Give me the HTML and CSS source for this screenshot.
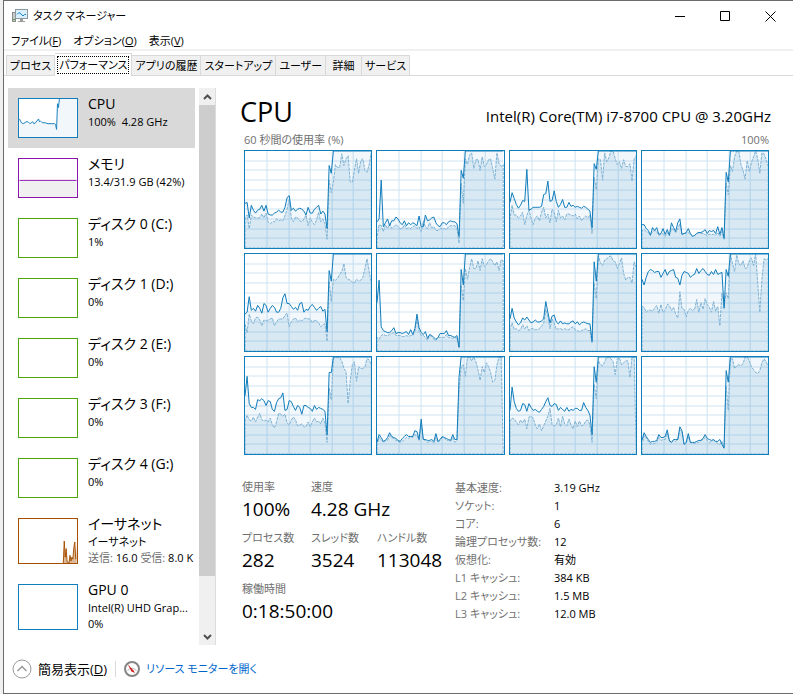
FILE: index.html
```html
<!DOCTYPE html>
<html lang="ja">
<head>
    <meta charset="UTF-8">
    <meta name="viewport" content="width=device-width, initial-scale=1.0">
    <title>タスク マネージャー</title>
    <link rel="stylesheet" href="styles.css">
</head>
<body>
    <div class="window">
        <header class="titlebar">
            <svg class="app-icon" width="16" height="14" viewBox="0 0 16 14">
                <rect x="0.5" y="3.5" width="3" height="9" fill="#c9c9c9" stroke="#8a8a8a"/>
                <rect x="1" y="10" width="2" height="1" fill="#4a4"/>
                <rect x="3.5" y="0.5" width="12" height="9" fill="#d9f0fc" stroke="#8d979e"/>
                <path d="M5 5.5L7 3.5L9 5L11 7L12.500 5.500H14" fill="none" stroke="#1583c4"/>
                <path d="M8 10h3v2h2v1H6v-1h2z" fill="#9b9b9b"/>
            </svg>
            <h1>タスク マネージャー</h1>
            <div class="window-buttons">
                <button aria-label="最小化"><svg width="11" height="11" viewBox="0 0 11 11"><path d="M0 5.5h10"/></svg></button>
                <button aria-label="最大化"><svg width="11" height="11" viewBox="0 0 11 11"><path d="M0.500 0.500h9v9h-9z"/></svg></button>
                <button aria-label="閉じる"><svg width="11" height="11" viewBox="0 0 11 11"><path d="M0.500 0.500l10 10M10.500 0.500l-10 10"/></svg></button>
            </div>
        </header>
        <nav class="menu">
            <button>ファイル(<u>F</u>)</button>
            <button>オプション(<u>O</u>)</button>
            <button>表示(<u>V</u>)</button>
        </nav>
        <div class="tabs" role="tablist">
            <button role="tab">プロセス</button>
            <button role="tab" class="selected" aria-selected="true"><span>パフォーマンス</span></button>
            <button role="tab">アプリの履歴</button>
            <button role="tab">スタートアップ</button>
            <button role="tab">ユーザー</button>
            <button role="tab">詳細</button>
            <button role="tab">サービス</button>
        </div>

        <div class="content">
            <aside class="sidebar">
                <ul class="devices">
                    <li class="device active">
                        <svg class="thumb cpu" viewBox="0 0 60 40">
                            <path class="area" d="M0 21L2 26L5 25L8 24L10 26L15 26L18 22L20 25L22 25L38 26L39 32L40 5L41 10L42 0H60V40H0z"/>
                            <path class="line" d="M0 21L2 25L4 26L7 24L9 24L11 26L14 24L15 26L17 25L20 21L21 24L22 23L24 25L27 25L30 26L37 26L38 27L39 32L40 5L41 9L42 0"/>
                        </svg>
                        <div class="info">
                            <h2>CPU</h2>
                            <p>100%&nbsp; 4.28 GHz</p>
                        </div>
                    </li>
                    <li class="device">
                        <svg class="thumb memory" viewBox="0 0 60 40">
                            <path class="area" d="M0 22H60V40H0z"/>
                            <path class="line" d="M0 22.500H60"/>
                        </svg>
                        <div class="info">
                            <h2>メモリ</h2>
                            <p>13.4/31.9 GB (42%)</p>
                        </div>
                    </li>
                    <li class="device">
                        <div class="thumb disk"></div>
                        <div class="info">
                            <h2>ディスク 0 (C:)</h2>
                            <p>1%</p>
                        </div>
                    </li>
                    <li class="device">
                        <div class="thumb disk"></div>
                        <div class="info">
                            <h2>ディスク 1 (D:)</h2>
                            <p>0%</p>
                        </div>
                    </li>
                    <li class="device">
                        <div class="thumb disk"></div>
                        <div class="info">
                            <h2>ディスク 2 (E:)</h2>
                            <p>0%</p>
                        </div>
                    </li>
                    <li class="device">
                        <div class="thumb disk"></div>
                        <div class="info">
                            <h2>ディスク 3 (F:)</h2>
                            <p>0%</p>
                        </div>
                    </li>
                    <li class="device">
                        <div class="thumb disk"></div>
                        <div class="info">
                            <h2>ディスク 4 (G:)</h2>
                            <p>0%</p>
                        </div>
                    </li>
                    <li class="device tall">
                        <svg class="thumb ethernet" viewBox="0 0 60 46">
                            <path class="area" d="M46 46L47 23L48 40L49 31L50 45L52 46L53 38L54 44L55 40L56 42L57 30L58 24L59 42L60 26V46z"/>
                            <path class="line" d="M46 46L47 23L48 40L49 31L50 45L52 46L53 38L54 44L55 40L56 42L57 30L58 24L59 42"/>
                        </svg>
                        <div class="info">
                            <h2>イーサネット</h2>
                            <p>イーサネット</p>
                            <p><span class="muted">送信:</span> 16.0 <span class="muted">受信:</span> 8.0 K</p>
                        </div>
                    </li>
                    <li class="device tall">
                        <div class="thumb gpu"></div>
                        <div class="info">
                            <h2>GPU 0</h2>
                            <p>Intel(R) UHD Grap...</p>
                            <p>0%</p>
                        </div>
                    </li>
                </ul>
                <div class="scrollbar">
                    <button aria-label="上へ"><svg width="9" height="6" viewBox="0 0 9 6"><path d="M1 5L4.500 1.500L8 5"/></svg></button>
                    <div class="scroll-thumb"></div>
                    <button aria-label="下へ"><svg width="9" height="6" viewBox="0 0 9 6"><path d="M1 1L4.500 4.500L8 1"/></svg></button>
                </div>
            </aside>

            <main class="performance">
                <div class="heading">
                    <h2>CPU</h2>
                    <span>Intel(R) Core(TM) i7-8700 CPU @ 3.20GHz</span>
                </div>
                <div class="axis">
                    <span>60 秒間の使用率 (%)</span>
                    <span>100%</span>
                </div>
                <div class="charts" id="charts"></div>
                <div class="stats">
                    <dl class="numbers">
                        <div><dt>使用率</dt><dd>100%</dd></div>
                        <div class="wide"><dt>速度</dt><dd>4.28 GHz</dd></div>
                        <div><dt>プロセス数</dt><dd>282</dd></div>
                        <div><dt>スレッド数</dt><dd>3524</dd></div>
                        <div><dt>ハンドル数</dt><dd>113048</dd></div>
                        <div class="full"><dt>稼働時間</dt><dd>0:18:50:00</dd></div>
                    </dl>
                    <dl class="details">
                        <dt>基本速度:</dt><dd>3.19 GHz</dd>
                        <dt>ソケット:</dt><dd>1</dd>
                        <dt>コア:</dt><dd>6</dd>
                        <dt>論理プロセッサ数:</dt><dd>12</dd>
                        <dt>仮想化:</dt><dd>有効</dd>
                        <dt>L1 キャッシュ:</dt><dd>384 KB</dd>
                        <dt>L2 キャッシュ:</dt><dd>1.5 MB</dd>
                        <dt>L3 キャッシュ:</dt><dd>12.0 MB</dd>
                    </dl>
                </div>
            </main>
        </div>

        <footer class="footer">
            <button>
                <svg width="20" height="20" viewBox="0 0 20 20" fill="none">
                    <circle cx="10" cy="10" r="9" stroke="#999"/>
                    <path d="M5.500 12L10 7.500L14.500 12" stroke="#999" stroke-width="1.500"/>
                </svg>
                <span>簡易表示(<u>D</u>)</span>
            </button>
            <a href="#">
                <svg width="16" height="16" viewBox="0 0 16 16">
                    <circle cx="8" cy="8" r="7" fill="#fff" stroke="#858585" stroke-width="2"/>
                    <path d="M3.500 10A5 5 0 0 1 12.500 10" fill="none" stroke="#bbb"/>
                    <path d="M3.500 3L9.500 9.500L11 12L7.500 10.500z" fill="#d01616"/>
                </svg>
                <span>リソース モニターを開く</span>
            </a>
        </footer>
    </div>

    <script>
        // one entry per logical processor, oldest sample first
        const cores = [
            {
                total: [46,47,31,44,39,36,39,40,44,38,44,35,34,34,36,37,39,37,37,42,52,54,39,41,38,40,41,40,38,34,42,36,36,40,42,44,35,38,35,20,85,77,100],
                kernel: [30,34,20,34,32,31,31,31,35,31,36,27,25,27,27,30,28,29,28,33,40,50,31,27,32,31,28,27,30,34,23,31,27,24,29,37,27,30,25,9,70,57,68,86,83,83,97,85,92,95,68,68,80,92,77,90,92,80,78,86,98]
            },
            {
                total: [27,30,70,22,26,30,23,28,28,32,30,26,24,28,23,26,24,26,25,23,33,22,22,34,28,29,31,32,26,23,22,26,26,24,27,28,27,27,25,12,80,72,100],
                kernel: [10,24,23,17,24,20,25,20,22,24,22,20,20,24,20,21,20,22,23,20,22,17,28,22,20,26,21,22,18,18,20,20,20,19,22,23,23,23,20,5,67,46,92,86,96,98,82,91,91,80,94,84,86,91,92,82,71,98,87,84,86]
            },
            {
                total: [47,57,51,45,41,44,49,48,81,39,40,42,42,42,42,43,55,56,69,48,49,59,48,42,45,50,42,42,47,43,44,42,43,42,41,43,42,40,38,21,87,81,100],
                kernel: [30,44,34,34,31,33,37,24,34,39,31,24,31,33,28,37,42,31,35,26,40,37,27,39,31,33,29,35,35,34,33,35,30,33,28,31,33,31,34,15,73,60,92,91,70,98,89,93,100,100,92,86,89,82,91,84,84,87,69,92,95]
            },
            {
                total: [24,24,20,18,13,21,18,21,14,15,20,14,19,13,26,21,17,26,30,14,15,16,20,15,12,13,15,16,16,17,19,15,18,17,18,15,22,14,21,10,78,68,100],
                kernel: [18,19,17,16,14,17,18,17,13,14,15,12,16,13,20,19,16,20,25,14,15,15,16,14,12,13,15,16,15,15,14,13,14,14,14,13,16,12,17,9,67,55,85,79,94,100,100,86,80,71,90,79,88,94,100,92,77,98,97,91,84]
            },
            {
                total: [38,40,56,42,44,41,47,44,39,49,47,40,44,47,45,40,40,44,55,59,49,49,46,43,45,42,49,50,40,43,42,46,48,45,42,44,46,41,43,20,83,72,100],
                kernel: [28,19,38,31,28,34,35,32,26,32,31,32,33,34,26,30,33,33,33,37,39,25,30,33,34,30,32,31,33,34,33,33,29,32,31,29,25,27,28,10,72,51,74,73,75,79,82,90,76,74,73,71,70,74,72,73,76,85,95,82,70]
            },
            {
                total: [50,73,25,21,20,19,19,21,24,18,19,19,18,19,20,17,22,17,23,38,24,19,17,20,13,17,16,14,12,14,18,18,18,21,16,16,15,14,16,4,84,68,100],
                kernel: [14,12,16,17,16,16,17,18,19,16,16,16,15,15,16,15,16,16,20,33,20,16,16,14,11,16,15,12,11,14,14,14,14,17,14,14,13,14,13,3,68,52,85,74,86,95,85,85,93,83,95,87,89,93,95,92,88,92,83,94,93]
            },
            {
                total: [33,44,34,30,27,29,34,32,35,32,29,30,32,30,30,31,33,51,40,29,36,37,30,28,31,28,29,28,28,30,31,28,30,27,29,30,29,28,28,10,92,72,100],
                kernel: [23,29,22,23,21,22,27,23,26,21,23,23,22,22,23,26,28,43,36,23,33,29,22,23,23,22,23,22,22,24,25,22,21,20,21,22,23,21,21,8,70,54,98,91,88,94,95,97,98,93,92,85,90,96,80,73,76,76,70,92,86]
            },
            {
                total: [74,68,76,82,84,83,81,82,82,76,80,84,78,82,83,84,76,75,68,78,82,81,80,76,78,79,85,80,83,85,82,79,78,82,79,84,79,80,81,44,84,77,100],
                kernel: [46,45,40,42,42,41,44,47,39,48,40,42,48,47,42,45,38,34,61,44,43,35,42,44,42,43,53,40,50,43,54,48,45,40,51,41,46,26,60,47,60,54,100,90,82,99,90,88,93,85,86,93,96,88,100,70,40,74,95,94,95]
            },
            {
                total: [60,80,52,48,48,46,56,55,57,55,50,55,54,46,44,53,57,58,63,45,46,55,54,49,45,50,48,41,50,50,48,47,44,50,46,48,47,46,44,20,84,84,100],
                kernel: [35,40,35,34,38,33,38,42,35,34,35,33,37,30,27,33,42,41,39,41,32,30,35,38,35,29,30,31,28,28,33,28,33,37,33,34,31,37,32,12,68,56,98,100,100,99,96,88,85,52,75,92,95,75,90,88,88,90,98,97,92]
            },
            {
                total: [12,20,17,13,14,17,22,18,17,16,14,13,16,18,20,18,18,18,24,23,15,36,15,15,14,14,15,13,21,13,15,18,17,16,15,14,20,15,15,80,100],
                kernel: [10,17,15,12,14,14,19,17,16,14,13,12,13,15,17,16,18,17,20,19,14,30,15,14,12,13,13,11,17,12,14,17,17,14,14,13,17,12,14,65,90,92,80,100,100,96,100,95,87,76,90,84,94,90,84,74,76,92,100,100,0]
            },
            {
                total: [45,69,54,47,44,45,52,51,44,52,48,45,46,44,43,46,49,54,58,50,49,52,51,45,48,46,44,48,44,46,45,47,47,45,45,53,48,45,40,20,90,74,100],
                kernel: [34,37,36,33,30,35,32,36,26,38,39,37,30,26,31,24,29,34,39,47,30,29,30,37,28,39,31,29,36,30,26,34,28,34,29,30,34,35,30,12,72,57,96,92,91,95,100,100,98,95,82,98,99,92,94,96,96,79,100,100,0]
            },
            {
                total: [14,22,18,15,12,13,13,14,20,17,17,18,25,14,12,15,15,15,28,24,10,12,21,12,12,12,13,14,14,16,20,16,15,14,15,13,13,15,10,6,86,74,100],
                kernel: [9,19,17,13,10,11,11,12,17,14,15,15,22,13,12,14,13,15,25,23,10,11,18,12,11,11,12,12,14,15,17,14,12,13,14,13,11,10,13,7,70,45,98,98,88,91,92,91,93,100,100,96,90,87,84,83,86,94,98,95,90]
            }
        ];

        const W = 126;
        const H = 97;

        function toPoints(values) {
            return values.map((v, i) => (i * W / 60).toFixed(1) + ',' + (H - v * H / 100).toFixed(1)).join(' ');
        }

        function drawChart(core, index) {
            const total = core.total.slice();
            while (total.length < 61) total.push(100);

            let grid = '';
            for (let i = 1; i < 10; i++) grid += `M0 ${Math.round(i * H / 10)}H${W}`;
            for (let x = 22; x < W; x += 21.5) grid += `M${Math.round(x)} 0V${H}`;

            return `<svg class="chart" role="img" aria-label="CPU ${index}" viewBox="0 0 ${W} ${H}" preserveAspectRatio="none">
                <path class="grid" d="${grid}"/>
                <polygon class="total-area" points="0,${H} ${toPoints(total)} ${W},${H}"/>
                <polygon class="kernel" points="0,${H} ${toPoints(core.kernel)} ${W},${H}"/>
                <polyline class="total-line" points="${toPoints(total)}"/>
            </svg>`;
        }

        document.getElementById('charts').innerHTML = cores.map(drawChart).join('');
    </script>
</body>
</html>
```
FILE: styles.css
```css
* {
    box-sizing: border-box;
}
body {
    margin: 0;
    padding-left: 3px;
    background: #f0f0f0;
    color: #000;
    font-family: "Open Sans", "Noto Sans CJK JP", sans-serif;
    font-feature-settings: "palt";
    font-size: 11px;
    line-height: 16px;
}
h1, h2, p, ul, dl, dd {
    margin: 0;
    padding: 0;
    font-weight: normal;
}
button {
    border: none;
    background: none;
    padding: 0;
    margin: 0;
    color: inherit;
    font: inherit;
    font-feature-settings: inherit;
}
.window {
    display: flex;
    flex-direction: column;
    min-height: 100vh;
    background: #fff;
    border: 1px solid #6b6b6b;
    border-right: none;
}

/* title bar, menu, tabs */
.titlebar {
    display: flex;
    align-items: center;
    height: 30px;
    padding-left: 8px;
}
.titlebar h1 {
    margin-left: 5px;
    font-size: 11px;
}
.window-buttons {
    display: flex;
    margin-left: auto;
}
.window-buttons button {
    display: flex;
    justify-content: center;
    align-items: center;
    width: 45px;
    height: 30px;
}
.window-buttons path {
    fill: none;
    stroke: #000;
}
.menu {
    display: flex;
    gap: 12px;
    height: 20px;
    padding: 2px 0 0 7px;
    border-bottom: 2px solid #f0f0f0;
}
.tabs {
    display: flex;
    align-items: flex-end;
    height: 25px;
    padding-left: 2px;
    border-bottom: 1px solid #d9d9d9;
}
.tabs button {
    height: 20px;
    min-width: 36px;
    padding: 0 3px;
    background: #f0f0f0;
    border: 1px solid #d9d9d9;
    border-left: none;
    border-bottom: none;
    white-space: nowrap;
}
.tabs button:first-child {
    border-left: 1px solid #d9d9d9;
}
.tabs .selected {
    height: 23px;
    padding: 0 2px;
    margin-bottom: -1px;
    background: #fff;
}
.tabs .selected span {
    display: block;
    padding: 0 1px;
    border: 1px dotted #000;
}

/* sidebar */
.content {
    display: flex;
    padding: 12px 24px 0 4px;
}
.sidebar {
    display: flex;
    flex: none;
    width: 208px;
    height: 557px;
    border-right: 1px solid #dcdcdc;
}
.devices {
    flex: 1;
    min-width: 0;
    overflow: hidden;
    list-style: none;
}
.device {
    display: flex;
    gap: 10px;
    height: 60px;
    padding: 10px 0 0 10px;
}
.device.active {
    background: #d9d9d9;
    margin-right: 4px;
}
.tall {
    height: 66px;
}
.thumb {
    flex: none;
    width: 60px;
    height: 40px;
    background: #fff;
    border: 1px solid;
}
.tall .thumb {
    height: 46px;
}
.thumb .line {
    fill: none;
    stroke: currentColor;
}
.thumb .area {
    fill: currentColor;
    fill-opacity: 0.06;
}
.cpu, .gpu {
    color: #117dbb;
}
.memory {
    color: #8b12ae;
}
.memory .area {
    fill: #000;
}
.disk {
    color: #4da60c;
}
.ethernet {
    color: #a74f01;
}
.ethernet .area {
    fill-opacity: 0.4;
}
.info {
    min-width: 0;
    margin-top: -4px;
    white-space: nowrap;
}
.info h2 {
    font-size: 14px;
    line-height: 20px;
}
.muted {
    color: #707070;
}
.scrollbar {
    display: flex;
    flex-direction: column;
    width: 16px;
    background: #f0f0f0;
}
.scrollbar button {
    height: 17px;
    line-height: 0;
}
.scrollbar path {
    fill: none;
    stroke: #505050;
    stroke-width: 2;
}
.scroll-thumb {
    height: 471px;
    margin-bottom: auto;
    background: #cdcdcd;
}

/* performance page */
.performance {
    flex: 1;
    min-width: 0;
    padding-left: 28px;
}
.heading {
    display: flex;
    justify-content: space-between;
    align-items: baseline;
    margin: 4px -2px 0 -4px;
}
.heading h2 {
    font-size: 27px;
    line-height: 40px;
}
.heading span {
    font-size: 15px;
}
.axis {
    display: flex;
    justify-content: space-between;
    margin-bottom: 2px;
    color: #707070;
}
.charts {
    display: grid;
    grid-template-columns: repeat(4, 1fr);
    gap: 4px;
}
.chart {
    width: 100%;
    height: 99px;
    border: 1px solid #117dbb;
}
.chart * {
    vector-effect: non-scaling-stroke;
}
.grid {
    fill: none;
    stroke: #cee3f2;
}
.total-area {
    fill: #117dbb;
    fill-opacity: 0.06;
}
.kernel {
    fill: #117dbb;
    fill-opacity: 0.11;
    stroke: #7fb2d3;
    stroke-dasharray: 3 1;
}
.total-line {
    fill: none;
    stroke: #117dbb;
}
.stats {
    display: flex;
    gap: 12px;
    margin: 24px 0 0 -2px;
}
.stats dt {
    color: #707070;
}
.numbers {
    display: grid;
    grid-template-columns: 69px 66px 66px;
    align-content: start;
    row-gap: 7px;
    white-space: nowrap;
}
.numbers dd {
    font-size: 19px;
    line-height: 28px;
}
.wide {
    grid-column: span 2;
}
.full {
    grid-column: span 3;
}
.details {
    display: grid;
    grid-template-columns: 99px auto;
    align-content: start;
    line-height: 18px;
}

/* footer */
.footer {
    display: flex;
    align-items: center;
    flex: 1;
    padding-left: 8px;
}
.footer button, .footer a {
    display: flex;
    align-items: center;
    gap: 6px;
}
.footer button {
    font-size: 13px;
}
.footer a {
    margin-left: 8px;
    padding-left: 8px;
    border-left: 1px solid #d9d9d9;
    color: #0066cc;
    text-decoration: none;
}
```
